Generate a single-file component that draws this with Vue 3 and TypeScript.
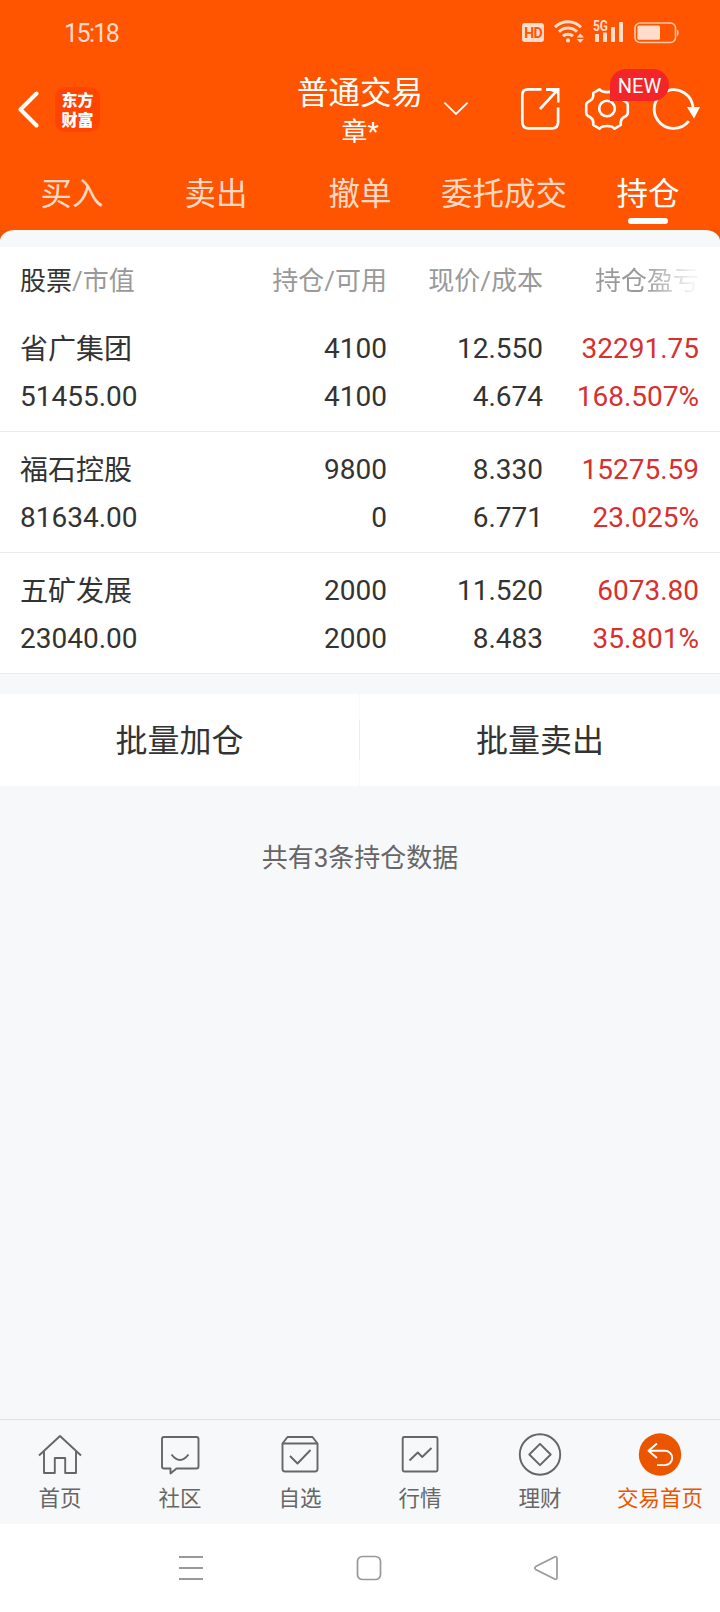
<script setup lang="ts">
interface Holding {
  name: string
  value: string
  amount: string
  available: string
  price: string
  cost: string
  profit: string
  rate: string
}

const tabs: string[] = ['买入', '卖出', '撤单', '委托成交', '持仓']
const activeTab = '持仓'

const holdings: Holding[] = [
  { name: '省广集团', value: '51455.00', amount: '4100', available: '4100', price: '12.550', cost: '4.674', profit: '32291.75', rate: '168.507%' },
  { name: '福石控股', value: '81634.00', amount: '9800', available: '0', price: '8.330', cost: '6.771', profit: '15275.59', rate: '23.025%' },
  { name: '五矿发展', value: '23040.00', amount: '2000', available: '2000', price: '11.520', cost: '8.483', profit: '6073.80', rate: '35.801%' },
]

const navItems = [
  { key: 'home', label: '首页' },
  { key: 'community', label: '社区' },
  { key: 'watch', label: '自选' },
  { key: 'market', label: '行情' },
  { key: 'wealth', label: '理财' },
  { key: 'trade', label: '交易首页' },
]
</script>

<template>
  <div class="screen">
    <header class="top">
      <div class="status">
        <span class="clock">15:18</span>
        <div class="indicators">
          <span class="hd">HD</span>
          <svg class="wifi" width="30" height="24" viewBox="0 0 30 24" fill="none" stroke="#ffdccb" stroke-width="3">
            <path d="M1 7.2A18 18 0 0 1 27 7.2" />
            <path d="M5 11.8A12.6 12.6 0 0 1 23 11.8" />
            <path d="M9 16.2A7.2 7.2 0 0 1 19 16.2" />
            <circle cx="14" cy="20.4" r="2.100" fill="#ffdccb" stroke="none" />
            <path d="M26.3 13.6l3.6 4h-7.2zM26.3 22.8l3.6-3.8h-7.2z" fill="#ffdccb" stroke="none" />
          </svg>
          <svg class="signal" width="32" height="24" viewBox="0 0 32 24" fill="#ffdccb">
            <text x="0" y="10.800" textLength="15" lengthAdjust="spacingAndGlyphs" class="net">5G</text>
            <rect x="2" y="14" width="4" height="8" rx=".8" />
            <rect x="10" y="12.500" width="4" height="9.500" rx=".8" />
            <rect x="18" y="7" width="4" height="15" rx=".8" />
            <rect x="26" y="2" width="4" height="20" rx=".8" />
          </svg>
          <svg class="battery" width="46" height="22" viewBox="0 0 46 22" fill="none">
            <rect x="1" y="1" width="40.5" height="19.5" rx="5" stroke="#ffc9a8" stroke-width="1.6" />
            <rect x="3.4" y="3.6" width="22.6" height="14.2" rx="1.5" fill="#ffdccb" />
            <path d="M43.2 7.4q1.4.4 1.4 3.4t-1.4 3.4z" fill="#ffdccb" />
          </svg>
        </div>
      </div>

      <div class="titlebar">
        <svg class="back" width="22" height="38" viewBox="0 0 22 38" fill="none" stroke="#fff" stroke-width="4" stroke-linecap="round" stroke-linejoin="round">
          <path d="M19.500 3.500L3.500 19.500L19.500 35.500" />
        </svg>
        <div class="logo"><span>东方</span><span>财富</span></div>
        <div class="heading">
          <h1>普通交易</h1>
          <p>章*</p>
        </div>
        <svg class="chevron" width="26" height="16" viewBox="0 0 26 16" fill="none" stroke="#fff" stroke-width="1.8">
          <path d="M1.4 1.6L13 13L24.6 1.6" />
        </svg>
        <div class="actions">
          <svg width="40" height="44" viewBox="0 0 40 44" fill="none" stroke="#fff" stroke-width="2.7">
            <path d="M21.500 2.300H8Q2.300 2.300 2.300 8v27q0 6.300 6.300 6.300h23.500q6 0 6-6.300V20.500" />
            <path d="M20 22L36.5 4.2" />
            <path d="M26 1h13.500v14.5h-2.4V6.5l-6.3-2.500H26z" fill="#fff" stroke="none" />
          </svg>
          <div class="settings">
            <svg width="46" height="44" viewBox="0 0 46 44" fill="none" stroke="#fff" stroke-width="2.6" stroke-linejoin="round">
              <path d="M15.500 2.300C18 6 28 6 30.500 2.300L36.800 6C36 11 38 13.500 42 15Q43.800 16 43.800 18V26Q43.800 28 42 29C38 30.500 36 33 36.800 38L30.500 41.700C28 38 18 38 15.500 41.700L9.200 38C10 33 8 30.500 4 29Q2.200 28 2.200 26V18Q2.200 16 4 15C8 13.500 10 11 9.200 6Z" />
              <circle cx="23" cy="21.500" r="7.800" />
            </svg>
            <span class="badge">NEW</span>
          </div>
          <svg width="50" height="44" viewBox="0 0 50 44" fill="none" stroke="#fff" stroke-width="2.8">
            <path d="M36.800 34.200A19.400 19.400 0 1 1 41 20.500" />
            <path d="M35 20h13L42 31.500z" fill="#fff" stroke="none" />
          </svg>
        </div>
      </div>

      <nav class="tabs">
        <span v-for="tab in tabs" :key="tab" class="tab" :class="{ active: tab === activeTab }">{{ tab }}</span>
      </nav>
    </header>

    <main class="content">
      <div class="sheet-edge"><div class="sheet-cap"></div></div>
      <section class="holdings">
        <div class="row head">
          <span><b>股票</b>/市值</span>
          <span>持仓/可用</span>
          <span>现价/成本</span>
          <span class="fade">持仓盈亏</span>
        </div>
        <div v-for="h in holdings" :key="h.name" class="row item">
          <div><span class="name">{{ h.name }}</span><span>{{ h.value }}</span></div>
          <div><span>{{ h.amount }}</span><span>{{ h.available }}</span></div>
          <div><span>{{ h.price }}</span><span>{{ h.cost }}</span></div>
          <div class="gain"><span>{{ h.profit }}</span><span>{{ h.rate }}</span></div>
        </div>
      </section>
      <div class="batch">
        <button type="button">批量加仓</button>
        <i class="divider"></i>
        <button type="button">批量卖出</button>
      </div>
      <p class="count">共有{{ holdings.length }}条持仓数据</p>
    </main>

    <footer class="bottom">
      <div v-for="item in navItems" :key="item.key" class="nav" :class="{ current: item.key === 'trade' }">
        <svg width="44" height="44" viewBox="0 0 44 44" fill="none" stroke="#666" stroke-width="1.9" stroke-linejoin="round">
          <template v-if="item.key === 'home'">
            <path d="M1 22.500L22 3L43 22.500" />
            <path d="M6 18.500V40H16.800V25H27.200V40H38V18.500" />
          </template>
          <template v-else-if="item.key === 'community'">
            <path d="M6 4h32.500q2 0 2 2v27.500q0 2-2 2H18.500L12.500 40.500V35.500H6q-2 0-2-2V6q0-2 2-2z" />
            <path d="M13.500 21.500q8.500 11 17 0" />
          </template>
          <template v-else-if="item.key === 'watch'">
            <path d="M4.500 10.500h35V36q0 2.500-2.500 2.500H7q-2.500 0-2.500-2.500zM4.500 10.500L9.500 4h25L39.500 10.500" />
            <path d="M12 23L19.500 30.500L32.500 17" />
          </template>
          <template v-else-if="item.key === 'market'">
            <rect x="4.700" y="4" width="34.800" height="34.500" rx="1.500" />
            <path d="M11.500 27.500L19.800 19.500L24.200 24L33.500 15" />
          </template>
          <template v-else-if="item.key === 'wealth'">
            <circle cx="22" cy="21.500" r="20.200" />
            <path d="M22 10.800L32.700 21.500L22 32.200L11.300 21.500z" />
          </template>
          <template v-else>
            <circle cx="22" cy="21.500" r="21.200" fill="#eb5500" stroke="none" />
            <path d="M19 10.500L10.500 17.700L19 25M10.500 17.700H27a7.200 7.200 0 0 1 0 14.400H19" stroke="#fff" />
          </template>
        </svg>
        <span>{{ item.label }}</span>
      </div>
    </footer>

    <div class="system">
      <svg width="26" height="26" viewBox="0 0 26 26" stroke="#999" stroke-width="2"><path d="M1 2h24M1 13h24M1 24h24" /></svg>
      <svg width="26" height="26" viewBox="0 0 26 26" fill="none" stroke="#999" stroke-width="1.700"><rect x="1.500" y="1.500" width="23" height="23" rx="5" /></svg>
      <svg width="26" height="26" viewBox="0 0 26 26" fill="none" stroke="#999" stroke-width="1.700"><path d="M1.700 11.600L20.500 2Q23 1 23 3.600V22.400Q23 25 20.500 24L1.700 14.400Q-.2 13 1.700 11.600z" /></svg>
    </div>
  </div>
</template>

<style>
body {
  margin: 0;
  background: #fff;
}
</style>

<style scoped>
.screen {
  display: flex;
  flex-direction: column;
  width: 720px;
  height: 1612px;
  overflow: hidden;
  background: #f7f8fa;
  color: #333;
  font-family: Roboto, "Noto Sans CJK SC", sans-serif;
}
.top {
  height: 230px;
  background: #ff5500;
  color: #fff;
}
.status {
  display: flex;
  justify-content: space-between;
  box-sizing: border-box;
  height: 64px;
  padding: 20px 40px 0 64px;
  color: #ffdccb;
}
.clock {
  font-size: 25px;
  line-height: 27px;
  letter-spacing: -1.600px;
}
.indicators {
  display: flex;
}
.hd {
  width: 22px;
  height: 19px;
  margin: 3px 10px 0 0;
  border-radius: 3px;
  background: #ffdccb;
  color: #ff5500;
  font-size: 14px;
  font-weight: 700;
  line-height: 20px;
  text-align: center;
  letter-spacing: -0.800px;
}
.signal {
  margin-left: 9px;
}
.net {
  font-size: 14px;
  font-weight: 700;
}
.battery {
  margin: 2px 0 0 9px;
}
.titlebar {
  display: flex;
  align-items: center;
  height: 90px;
  padding-left: 17px;
}
.logo {
  display: flex;
  flex-direction: column;
  box-sizing: border-box;
  width: 45px;
  height: 45px;
  margin-left: 16px;
  padding-top: 2px;
  border-radius: 10px;
  background: #ff4400;
  font-family: "Noto Sans CJK SC", sans-serif;
  font-size: 16px;
  font-weight: 900;
  line-height: 20px;
  text-align: center;
}
.heading {
  width: 140px;
  margin-left: 190px;
  padding-top: 4px;
  text-align: center;
}
h1 {
  margin: 0;
  font-size: 31.500px;
  font-weight: 400;
  line-height: 42px;
}
p {
  margin: 0;
}
.heading p {
  font-size: 26px;
  line-height: 34px;
}
.chevron {
  margin-left: 13px;
}
.actions {
  display: flex;
  margin-left: 51px;
}
.settings {
  position: relative;
  height: 44px;
  margin: 0 22px 0 24px;
}
.badge {
  position: absolute;
  z-index: 1;
  left: 26px;
  top: -18px;
  width: 59px;
  height: 32px;
  border-radius: 16px 16px 16px 0;
  background: #f22529;
  font-size: 20px;
  line-height: 34px;
  text-align: center;
}
.tabs {
  display: grid;
  grid-template-columns: repeat(5, 144px);
  height: 76px;
}
.tab {
  display: flex;
  flex-direction: column;
  align-items: center;
  padding-top: 19px;
  color: #ffd9c4;
  font-size: 31.500px;
  line-height: 44px;
}
.tab.active {
  color: #fff;
}
.tab.active::after {
  content: "";
  width: 40px;
  height: 6px;
  margin-top: 1px;
  border-radius: 3px;
  background: #fff;
}
.content {
  flex: 1;
}
.sheet-edge {
  height: 17px;
  background: linear-gradient(#eb5500 0 10px, #f7f8fa 10px);
}
.sheet-cap {
  height: 17px;
  border-radius: 15px 15px 0 0 / 11px 11px 0 0;
  background: #f7f8fa;
}
.holdings {
  background: #fff;
}
.row {
  display: grid;
  grid-template-columns: 210px 157px 156px 156px;
  box-sizing: border-box;
  padding-left: 20px;
}
.head {
  height: 64px;
  padding-top: 16px;
  color: #999;
  font-size: 26px;
  line-height: 36px;
}
.head b {
  color: #333;
  font-weight: 400;
}
.row > :not(:first-child) {
  text-align: right;
}
.fade {
  background: linear-gradient(90deg, #999 0 102px, #f2f2f2 148px);
  background-clip: text;
  color: transparent;
}
.item {
  height: 121px;
  padding-top: 14px;
  border-bottom: 1px solid #ebebeb;
  font-size: 28px;
  line-height: 48px;
}
.item > div {
  display: flex;
  flex-direction: column;
}
.name {
  padding-top: 1px;
  margin-bottom: -1px;
}
.gain {
  color: #d7302f;
}
.batch {
  display: grid;
  grid-template-columns: 359px 1px 360px;
  align-items: center;
  height: 92px;
  margin-top: 20px;
  background: #fff;
}
.batch button {
  padding: 2px 0 0;
  border: 0;
  background: none;
  color: #333;
  font: inherit;
  font-size: 32px;
  line-height: 44px;
}
.divider {
  height: 92px;
  background: linear-gradient(#f7f8fa 26px, #ebebeb 26px 66px, #f7f8fa 66px);
}
.count {
  margin-top: 54px;
  color: #666;
  font-size: 26px;
  line-height: 36px;
  text-align: center;
}
.bottom {
  display: grid;
  grid-template-columns: repeat(6, 120px);
  box-sizing: border-box;
  height: 105px;
  border-top: 1px solid #e0e3e6;
  background: #f7f8fa;
}
.nav {
  display: flex;
  flex-direction: column;
  align-items: center;
  padding-top: 13px;
  color: #666;
  font-size: 21.500px;
  line-height: 32px;
}
.nav span {
  margin-top: 6px;
}
.nav.current {
  color: #eb5500;
}
.system {
  display: flex;
  gap: 152px;
  box-sizing: border-box;
  height: 88px;
  padding: 31px 0 0 178px;
  background: #fff;
}
</style>
